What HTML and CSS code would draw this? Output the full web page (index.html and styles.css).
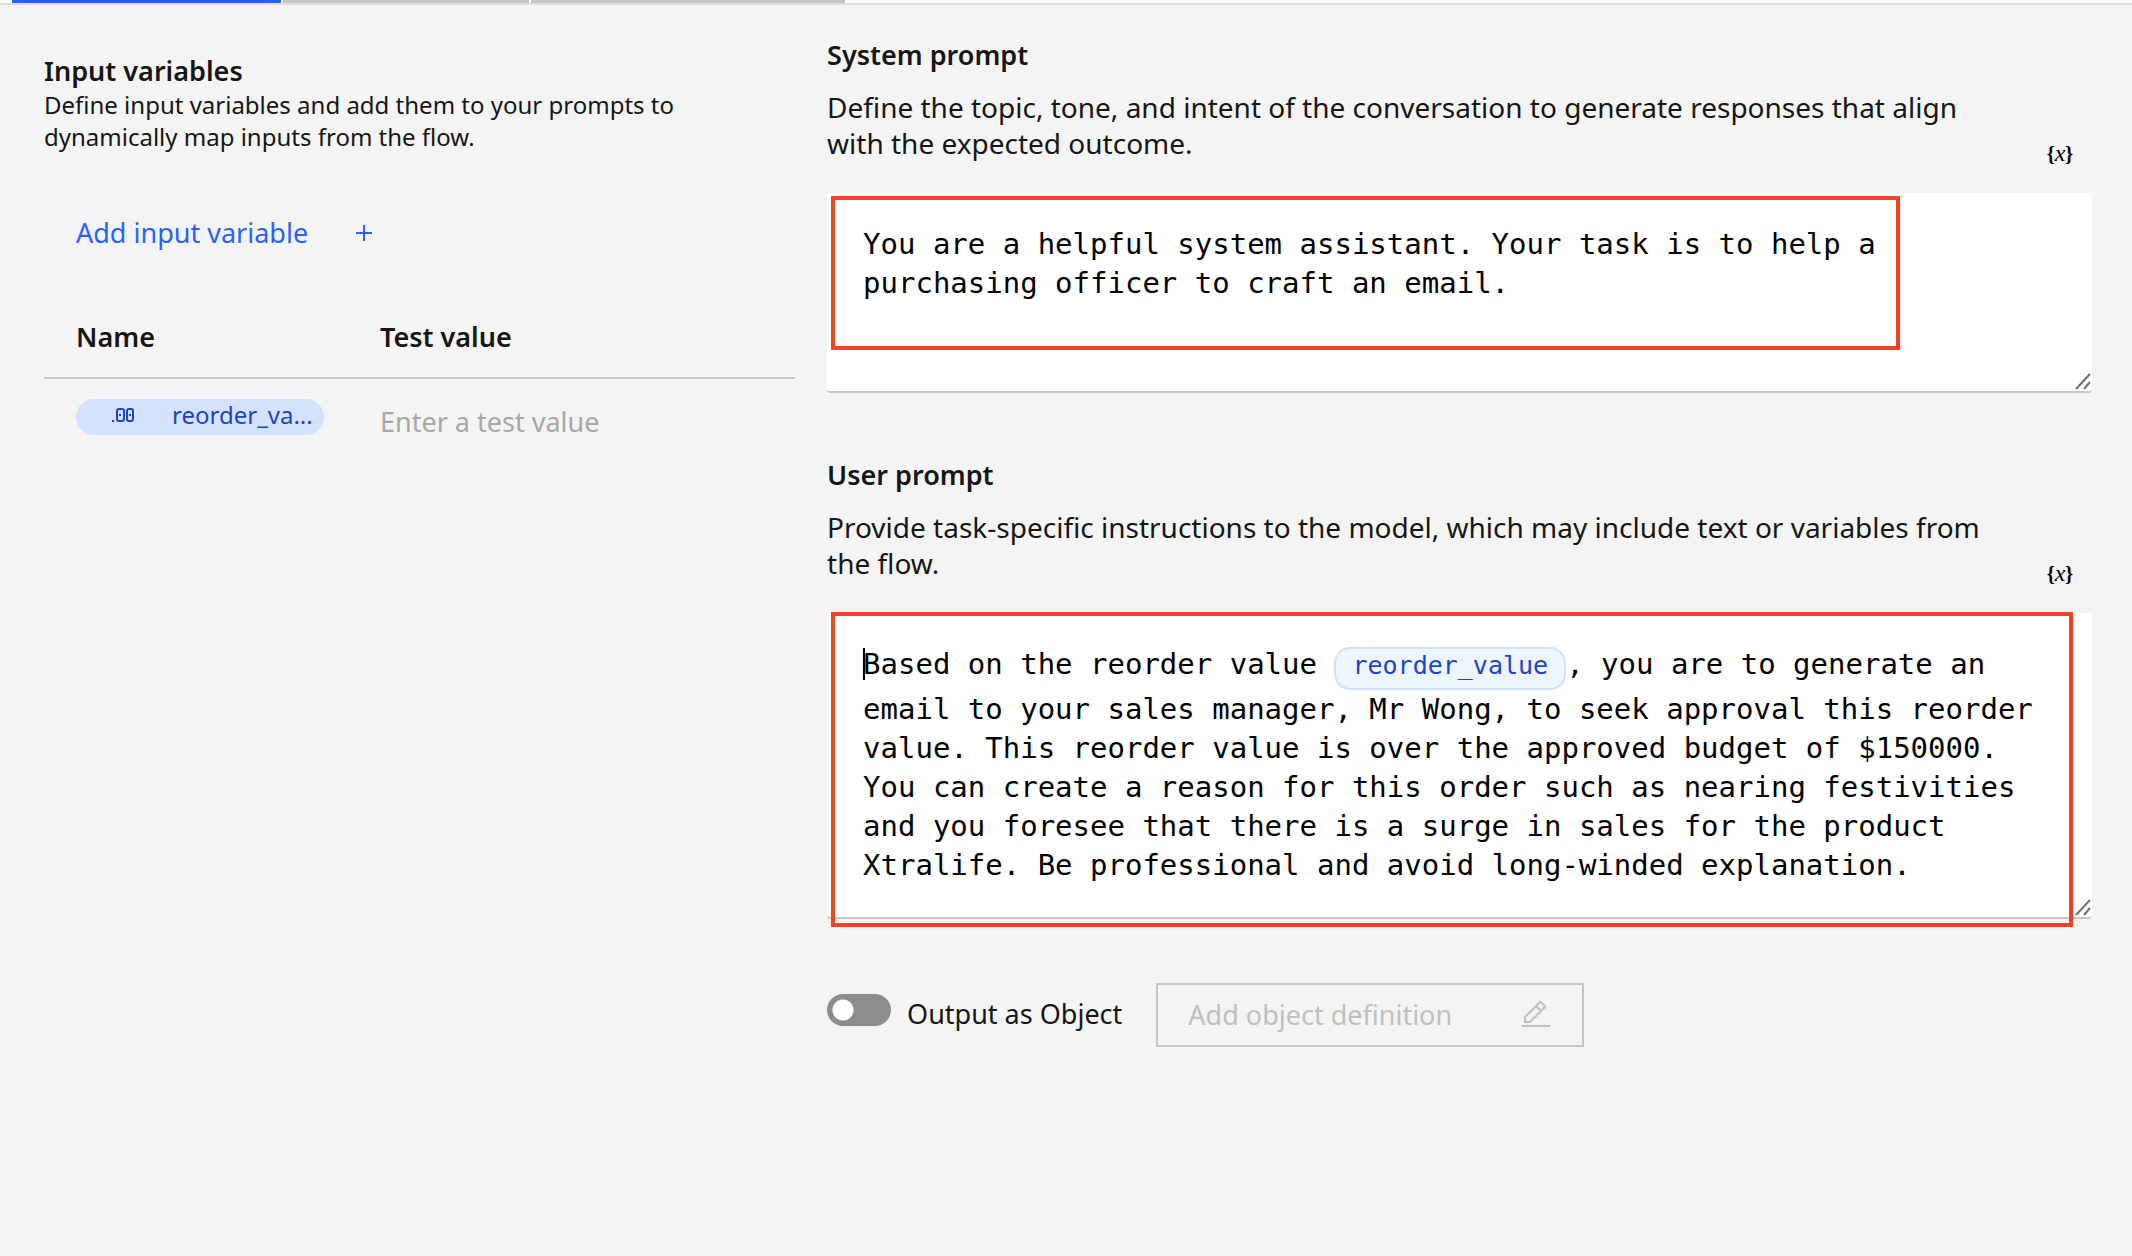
FILE: index.html
```html
<!DOCTYPE html>
<html lang="en">
<head>
<meta charset="utf-8">
<meta name="viewport" content="width=device-width, initial-scale=1">
<title>Prompt settings</title>
<link rel="stylesheet" href="styles.css">
</head>
<body>
<header class="tabs">
  <span class="tab tab-active"></span>
  <span class="tab tab-second"></span>
  <span class="tab tab-third"></span>
</header>
<main class="layout">
  <section class="variables">
    <h2 class="heading">Input variables</h2>
    <p class="hint">Define input variables and add them to your prompts to dynamically map inputs from the flow.</p>
    <button class="add-button" type="button">
      <span>Add input variable</span>
      <svg class="icon" viewBox="0 0 32 32" aria-hidden="true"><path d="M17 15V8h-2v7H8v2h7v7h2v-7h7v-2z"/></svg>
    </button>
    <table class="variable-table">
      <thead>
        <tr><th class="name-cell" scope="col">Name</th><th scope="col">Test value</th></tr>
      </thead>
      <tbody>
        <tr>
          <td class="name-cell">
            <span class="pill" title="reorder_value">
              <svg class="decimal-icon" viewBox="0 0 24 16" aria-hidden="true"><path fill="currentColor" d="M0 12h2v2H0z"/><path fill="none" stroke="currentColor" stroke-width="2" d="M6 1h4q2 0 2 2v8q0 2-2 2H7q-2 0-2-2V3q0-2 2-2zM17 1h2q2 0 2 2v8q0 2-2 2h-2q-2 0-2-2V3q0-2 2-2z"/><path fill="currentColor" d="M7 6h2v2H7zM17 6h2v2h-2z"/></svg>
              <span>reorder_va...</span>
            </span>
          </td>
          <td><input class="test-input" type="text" placeholder="Enter a test value" aria-label="Test value for reorder_value"></td>
        </tr>
      </tbody>
    </table>
  </section>

  <div class="prompts">
    <section class="prompt">
      <h2 class="heading"><label for="system-prompt">System prompt</label></h2>
      <div class="prompt-intro">
        <p class="description">Define the topic, tone, and intent of the conversation to generate responses that align with the expected outcome.</p>
        <button class="insert-button" type="button" title="Insert variable"><b>{</b><i>x</i><b>}</b></button>
      </div>
      <div class="field">
        <textarea class="editor" id="system-prompt" rows="3">You are a helpful system assistant. Your task is to help a purchasing officer to craft an email.</textarea>
        <svg class="grip" viewBox="0 0 16 20" aria-hidden="true"><path d="M1 18L15 3M9 18l6-7"/></svg>
        <span class="highlight highlight-system"></span>
      </div>
    </section>

    <section class="prompt">
      <h2 class="heading" id="user-label">User prompt</h2>
      <div class="prompt-intro">
        <p class="description">Provide task-specific instructions to the model, which may include text or variables from the flow.</p>
        <button class="insert-button" type="button" title="Insert variable"><b>{</b><i>x</i><b>}</b></button>
      </div>
      <div class="field">
        <div class="editor" role="textbox" aria-multiline="true" aria-labelledby="user-label" contenteditable="true" spellcheck="false"><span class="caret"></span>Based on the reorder value <span class="tag" contenteditable="false">reorder_value</span>, you are to generate an email to your sales manager, Mr Wong, to seek approval this reorder value. This reorder value is over the approved budget of $150000. You can create a reason for this order such as nearing festivities and you foresee that there is a surge in sales for the product Xtralife. Be professional and avoid long-winded explanation.</div>
        <svg class="grip" viewBox="0 0 16 20" aria-hidden="true"><path d="M1 18L15 3M9 18l6-7"/></svg>
        <span class="highlight highlight-user"></span>
      </div>
    </section>

    <div class="output">
      <label class="switch">
        <input class="switch-input" type="checkbox">
        <span class="switch-text">Output as Object</span>
      </label>
      <button class="define-button" type="button" disabled>
        <span>Add object definition</span>
        <svg class="icon" viewBox="0 0 32 32" aria-hidden="true"><path d="M2 26h28v2H2zM25.4 9c.8-.8.8-2 0-2.8l-3.6-3.6c-.8-.8-2-.8-2.8 0l-15 15V24h6.4l15-15zM20.4 4L24 7.6l-3 3L17.4 7l3-3zM6 22v-3.6l10-10 3.6 3.6-10 10H6z"/></svg>
      </button>
    </div>
  </div>
</main>
</body>
</html>
```
FILE: styles.css
```css
* { box-sizing: border-box; }

body {
  margin: 0;
  background: #f4f4f4;
  color: #161616;
  font: 27px/36px "Noto Sans", sans-serif;
}

button, input { font: inherit; }
h2, p { margin: 0; }
.icon { width: 32px; height: 32px; fill: currentColor; }

/* Lower edge of the tab strip */
.tabs {
  display: flex;
  gap: 2px;
  height: 5px;
  padding-left: 12px;
  background: #fff;
  border-bottom: 2px solid #e0e0e0;
}
.tab { background: #c6c6c6; }
.tab-active { width: 269px; background: #2962ff; }
.tab-second { width: 246px; }
.tab-third { width: 314px; }

.layout {
  display: grid;
  grid-template-columns: minmax(0, 19fr) minmax(0, 32fr);
  gap: 32px;
  padding: 32px 40px 64px 44px;
}

.heading { font-size: 27px; font-weight: 600; line-height: 36px; }

/* Input variables */
.variables { padding-top: 16px; }
.hint { padding-right: 32px; font-size: 24px; line-height: 32px; }

.add-button {
  display: flex;
  align-items: center;
  gap: 40px;
  height: 64px;
  margin-top: 48px;
  padding: 0 32px;
  border: 0;
  background: none;
  color: #2962ff;
}

.variable-table {
  width: 100%;
  margin-top: 32px;
  border-collapse: separate;
  border-spacing: 0;
  table-layout: fixed;
}
.variable-table th {
  height: 82px;
  padding: 0;
  border-bottom: 2px solid #c6c6c6;
  font-weight: 600;
  text-align: left;
}
.variable-table td { padding: 20px 0 0; vertical-align: top; }
.variable-table .name-cell { width: 336px; padding-left: 32px; }

.pill {
  display: flex;
  gap: 36px;
  width: 248px;
  height: 36px;
  padding: 0 8px 0 36px;
  border-radius: 18px;
  background: #d4e1ff;
  color: #1f43ca;
  font-size: 24px;
  line-height: 32px;
  white-space: nowrap;
}
.decimal-icon { flex: none; width: 24px; height: 16px; margin-top: 9px; }

.test-input {
  display: block;
  width: 100%;
  height: 44px;
  padding: 0;
  border: 0;
  background: none;
  color: #161616;
}
.test-input::placeholder { color: #a8a8a8; opacity: 1; }

/* Prompts */
.prompts { display: flex; flex-direction: column; gap: 64px; }

.prompt-intro {
  display: flex;
  align-items: flex-end;
  gap: 32px;
  margin: 16px 0;
}
.description { flex: 1; padding-bottom: 16px; font-size: 28px; line-height: 36px; }

.insert-button {
  width: 64px;
  height: 48px;
  padding: 0;
  border: 0;
  background: none;
  color: #000;
  font: 20px/24px "Liberation Serif", serif;
}
.insert-button i { font-size: 24px; }

.field { position: relative; }
.editor {
  display: block;
  width: 100%;
  min-height: 200px;
  padding: 32px 36px;
  border: 0;
  border-bottom: 2px solid #c6c6c6;
  border-radius: 4px;
  outline: 0;
  resize: none;
  overflow: hidden;
  background: #fff;
  color: #000;
  font: 29px/39px "DejaVu Sans Mono", monospace;
}

.caret {
  position: absolute;
  top: 35px;
  left: 36px;
  width: 2px;
  height: 32px;
  background: #000;
}

.tag {
  display: inline-block;
  padding: 0 16px 5px;
  border: 2px solid #d0e2ff;
  border-radius: 16px;
  background: #edf5ff;
  color: #1f43ca;
  font-size: 25px;
  line-height: 34px;
}

.grip {
  position: absolute;
  right: 1px;
  bottom: 2px;
  width: 16px;
  height: 20px;
  fill: none;
  stroke: #6f6f6f;
  stroke-width: 2;
}

.highlight {
  position: absolute;
  border: 4px solid #ee4326;
  pointer-events: none;
}
.highlight-system { inset: 3px 192px 43px 4px; }
.highlight-user { inset: -1px 19px -8px 4px; }

/* Output options */
.output { display: flex; align-items: center; gap: 34px; }
.switch { display: flex; align-items: flex-start; gap: 16px; padding-bottom: 4px; }
.switch-text { margin-top: 2px; }
.switch-input {
  appearance: none;
  flex: none;
  width: 64px;
  height: 32px;
  margin: 0;
  border-radius: 16px;
  background: radial-gradient(circle at 16px 16px, #fff 10px, #8d8d8d 11px);
}
.switch-input:checked { background: radial-gradient(circle at 48px 16px, #fff 10px, #24a148 11px); }

.define-button {
  display: flex;
  align-items: center;
  justify-content: space-between;
  width: 428px;
  height: 64px;
  padding: 0 30px;
  border: 2px solid #c6c6c6;
  background: none;
  color: #c0c0c0;
}
```
